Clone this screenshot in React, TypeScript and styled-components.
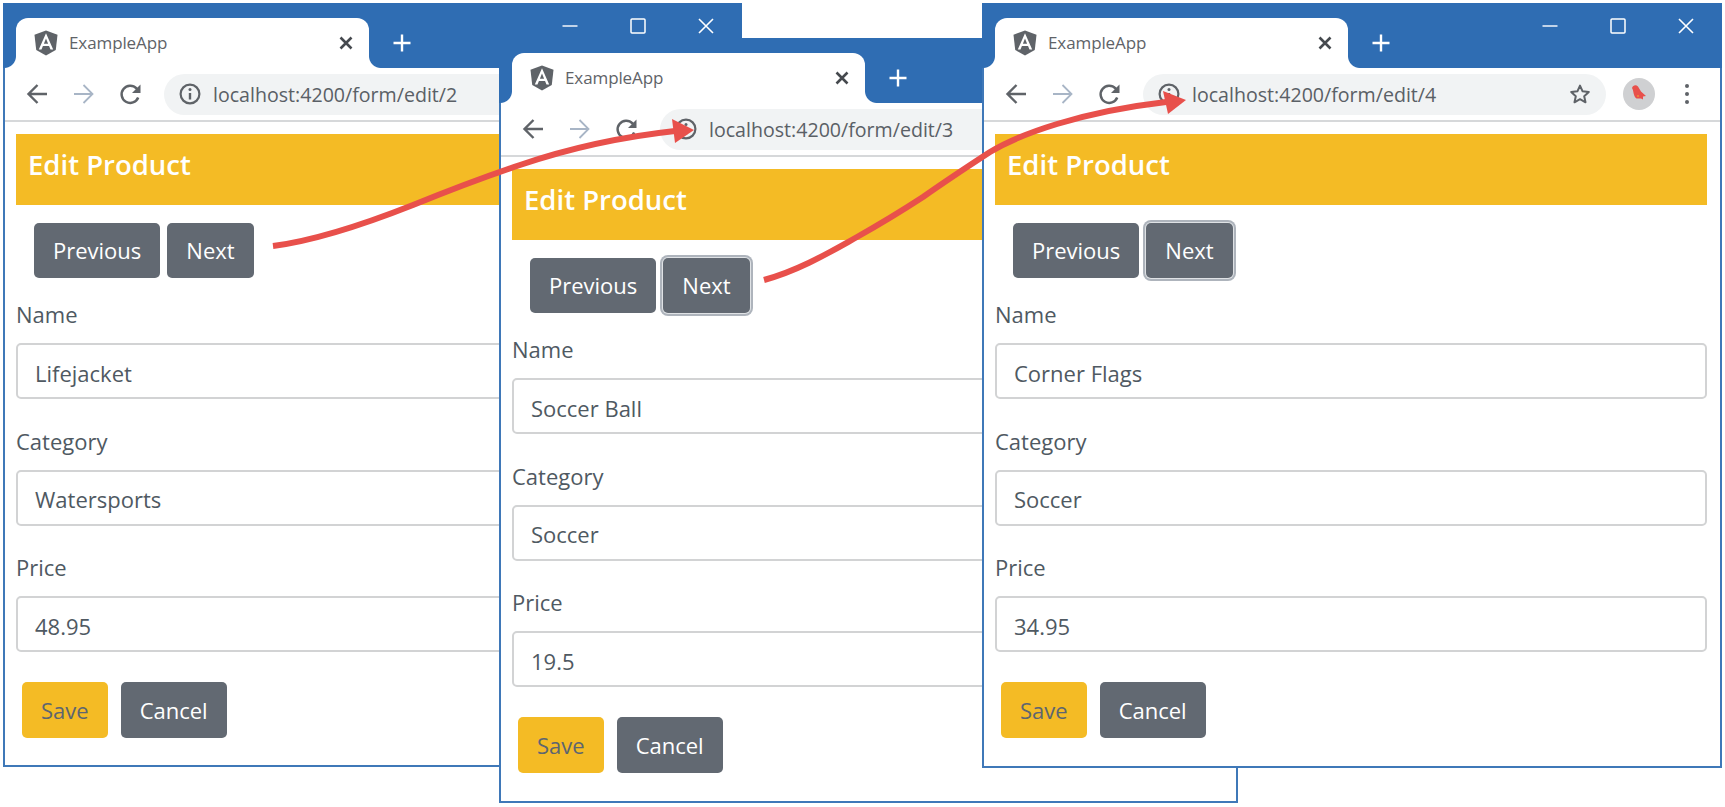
import * as React from 'react';
import styled, { createGlobalStyle } from 'styled-components';

const GlobalStyle = createGlobalStyle`
  html, body {
    margin: 0;
    padding: 0;
    background: #fff;
  }
  body {
    font-family: "Open Sans", "Noto Sans", sans-serif;
  }
`;

const Desktop = styled.div`
  position: relative;
  width: 1725px;
  height: 807px;
  overflow: hidden;
  background: #fff;
`;

// each browser window is placed on the free canvas
const Frame = styled.div<{ $left: number; $top: number; $width: number; $height: number }>`
  position: absolute;
  left: ${p => p.$left}px;
  top: ${p => p.$top}px;
  width: ${p => p.$width}px;
  height: ${p => p.$height}px;
  box-sizing: border-box;
  display: flex;
  flex-direction: column;
  background: #fff;
  border: 2px solid #3f78b8;
  border-top: none;
`;

const TitleBar = styled.div`
  height: 65px;
  flex: none;
  display: flex;
  align-items: flex-end;
  margin: 0 -2px;
  padding-left: 13px;
  background: #2f6db3;
`;

const Tab = styled.div`
  position: relative;
  box-sizing: border-box;
  width: 353px;
  height: 50px;
  display: flex;
  align-items: center;
  padding: 0 15px 0 17px;
  background: #fff;
  border-radius: 12px 12px 0 0;
  &::before,
  &::after {
    content: '';
    position: absolute;
    bottom: 0;
    width: 12px;
    height: 12px;
    background: radial-gradient(circle at var(--cx) 0, #2f6db3 11.5px, #fff 12.5px);
  }
  &::before {
    --cx: 0;
    left: -12px;
  }
  &::after {
    --cx: 100%;
    right: -12px;
  }
`;

const TabTitle = styled.span`
  flex: 1;
  margin: 0 0 2px 10px;
  font-size: 17px;
  letter-spacing: -0.1px;
  color: #5f6368;
`;

const PlusButton = styled.div`
  width: 24px;
  height: 50px;
  margin-left: 21px;
  display: flex;
  align-items: center;
  justify-content: center;
`;

const WindowControls = styled.div`
  display: flex;
  margin: 0 2px 0 auto;
  align-self: flex-start;
`;

const ControlButton = styled.div`
  width: 68px;
  height: 46px;
  display: flex;
  align-items: center;
  justify-content: center;
`;

const Toolbar = styled.div`
  height: 54px;
  flex: none;
  box-sizing: border-box;
  display: flex;
  align-items: center;
  padding: 0 23px 0 8px;
  border-bottom: 2px solid #d6d8da;
`;

const NavButton = styled.div`
  width: 47px;
  height: 40px;
  flex: none;
  display: flex;
  align-items: center;
  justify-content: center;
`;

const Omnibox = styled.div`
  flex: 1;
  min-width: 0;
  height: 41px;
  margin-left: 10px;
  padding: 0 15px;
  display: flex;
  align-items: center;
  background: #f1f3f4;
  border-radius: 21px;
`;

const Url = styled.span`
  flex: 1;
  margin-left: 12px;
  font-size: 19.6px;
  font-weight: 500;
  color: #5a6066;
  white-space: nowrap;
`;

const Avatar = styled.div`
  width: 32px;
  height: 32px;
  flex: none;
  margin: 0 22px 0 17px;
  border-radius: 50%;
  background: #cfd0d2;
  display: flex;
  align-items: center;
  justify-content: center;
`;

const MenuDots = styled.div`
  width: 20px;
  flex: none;
  display: flex;
  flex-direction: column;
  align-items: center;
  gap: 4px;
  i {
    width: 4px;
    height: 4px;
    border-radius: 50%;
    background: #5f6368;
  }
`;

const Page = styled.div`
  flex: 1;
  padding: 12px 13px 0 11px;
  color: #4f5962;
`;

const Header = styled.div`
  height: 71px;
  box-sizing: border-box;
  display: flex;
  align-items: center;
  padding: 0 0 11px 12px;
  background: #f4bb25;
  color: #fff;
  font-size: 27.5px;
  font-weight: 600;
`;

const NavRow = styled.div`
  display: flex;
  gap: 7px;
  margin: 18px 0 0 18px;
`;

const Button = styled.div<{ $tone?: 'gray' | 'yellow'; $focus?: boolean }>`
  height: 55px;
  box-sizing: border-box;
  padding: 0 19px 1px;
  display: flex;
  align-items: center;
  font-size: 22px;
  border-radius: 5px;
  background: ${p => (p.$tone === 'yellow' ? '#f4bb25' : '#626972')};
  color: ${p => (p.$tone === 'yellow' ? '#5d6570' : '#fff')};
  ${p => p.$focus && 'box-shadow: 0 0 0 1px #dfe2e5, 0 0 0 3px #aeb4bc;'}
`;

const ActionButton = styled(Button)`
  height: 56px;
  padding: 0 19px 1px;
`;

const Field = styled.div`
  margin-top: 20px;
  & + & {
    margin-top: 25.5px;
  }
`;

const Label = styled.div`
  height: 33px;
  margin-bottom: 12px;
  line-height: 33px;
  font-size: 22px;
  color: #4f5962;
`;

const Input = styled.div`
  height: 56px;
  box-sizing: border-box;
  padding: 3px 17px 0;
  display: flex;
  align-items: center;
  font-size: 22px;
  color: #4f5962;
  border: 2px solid #d2d3d4;
  border-radius: 5px;
  background: #fff;
`;

const ActionRow = styled.div`
  display: flex;
  gap: 13px;
  margin: 30px 0 0 6px;
`;

const Arrows = styled.svg`
  position: absolute;
  inset: 0;
  pointer-events: none;
`;

const AngularLogo = () => (
  <svg width="26" height="26" viewBox="20 25 210 210">
    <path fill="#5f6368" d="M125 30L31.900 63.200l14.200 123.100L125 230l78.900-43.700 14.200-123.100z" />
    <path fill="#fff" d="M125 52.100L66.800 182.600h21.700l11.700-29.200h49.400l11.700 29.200H183L125 52.100zm17 83.300h-34l17-40.900 17 40.900z" />
  </svg>
);

const CloseIcon = () => (
  <svg width="16" height="16" viewBox="0 0 16 16">
    <path d="M2.500 2.500l11 11M13.500 2.500l-11 11" stroke="#45494e" strokeWidth="2.600" fill="none" />
  </svg>
);

const PlusIcon = () => (
  <svg width="20" height="20" viewBox="0 0 20 20">
    <path d="M10 1.500v17M1.500 10h17" stroke="#fff" strokeWidth="2.400" fill="none" />
  </svg>
);

const MinIcon = () => (
  <svg width="16" height="16" viewBox="0 0 16 16">
    <path d="M0.500 8h15" stroke="#e8eef6" strokeWidth="1.600" fill="none" />
  </svg>
);

const MaxIcon = () => (
  <svg width="16" height="16" viewBox="0 0 16 16">
    <rect x="1" y="1" width="14" height="14" rx="1" stroke="#fff" strokeWidth="1.500" fill="none" />
  </svg>
);

const WinCloseIcon = () => (
  <svg width="18" height="18" viewBox="0 0 18 18">
    <path d="M2 2l14 14M16 2L2 16" stroke="#fff" strokeWidth="1.600" fill="none" />
  </svg>
);

const ArrowIcon = ({ flip, color, weight }: { flip?: boolean; color: string; weight: number }) => (
  <svg width="22" height="22" viewBox="0 0 22 22" style={flip ? { transform: 'scaleX(-1)' } : undefined}>
    <path d="M21 11H3M11.500 2L2.500 11l9 9" stroke={color} strokeWidth={weight} fill="none" />
  </svg>
);

const ReloadIcon = () => (
  <svg width="23" height="23" viewBox="0 0 23 23">
    <path d="M19.200 14.500A8.600 8.600 0 1 1 17.500 5.400L20 8" stroke="#5f6368" strokeWidth="2.500" fill="none" />
    <path d="M21.500 1.500v8.500H13z" fill="#5f6368" />
  </svg>
);

const InfoIcon = () => (
  <svg width="22" height="22" viewBox="0 0 22 22" style={{ flex: 'none' }}>
    <circle cx="11" cy="11" r="9.400" stroke="#5f6368" strokeWidth="2.200" fill="none" />
    <path d="M11 10v6.500" stroke="#5f6368" strokeWidth="2.400" />
    <circle cx="11" cy="6.600" r="1.500" fill="#5f6368" />
  </svg>
);

const StarIcon = () => (
  <svg width="22" height="22" viewBox="0 0 22 22" style={{ flex: 'none' }}>
    <path
      d="M11 2.600l2.600 5.700 6.200.7-4.600 4.200 1.300 6.100L11 16.200l-5.500 3.100 1.300-6.100L2.200 9l6.200-.7z"
      stroke="#5f6368"
      strokeWidth="2"
      strokeLinejoin="round"
      fill="none"
    />
  </svg>
);

const BirdIcon = () => (
  <svg width="22" height="22" viewBox="0 0 22 22">
    <path fill="#e8504b" d="M4 5c1-3 4-3.500 6-1.500l3 5 5 4.500-3 .5v3l-2-1h-4.500C5 13 6 8 4 5z" />
    <circle cx="10" cy="13" r="0.800" fill="#f4bb25" />
  </svg>
);

interface Product {
  id: number;
  name: string;
  category: string;
  price: string;
  left: number;
  top: number;
  width: number;
  height: number;
  focusNext: boolean;
}

const products: Product[] = [
  { id: 2, name: 'Lifejacket', category: 'Watersports', price: '48.95', left: 3, top: 3, width: 739, height: 764, focusNext: false },
  { id: 3, name: 'Soccer Ball', category: 'Soccer', price: '19.5', left: 499, top: 38, width: 739, height: 765, focusNext: true },
  { id: 4, name: 'Corner Flags', category: 'Soccer', price: '34.95', left: 982, top: 3, width: 740, height: 765, focusNext: true }
];

const BrowserWindow = ({ product }: { product: Product }) => (
  <Frame $left={product.left} $top={product.top} $width={product.width} $height={product.height}>
    <TitleBar>
      <Tab>
        <AngularLogo />
        <TabTitle>ExampleApp</TabTitle>
        <CloseIcon />
      </Tab>
      <PlusButton>
        <PlusIcon />
      </PlusButton>
      <WindowControls>
        <ControlButton>
          <MinIcon />
        </ControlButton>
        <ControlButton>
          <MaxIcon />
        </ControlButton>
        <ControlButton>
          <WinCloseIcon />
        </ControlButton>
      </WindowControls>
    </TitleBar>
    <Toolbar>
      <NavButton>
        <ArrowIcon color="#5f6368" weight={2.4} />
      </NavButton>
      <NavButton>
        <ArrowIcon flip color="#a8b5c6" weight={1.8} />
      </NavButton>
      <NavButton>
        <ReloadIcon />
      </NavButton>
      <Omnibox>
        <InfoIcon />
        <Url>localhost:4200/form/edit/{product.id}</Url>
        <StarIcon />
      </Omnibox>
      <Avatar>
        <BirdIcon />
      </Avatar>
      <MenuDots>
        <i />
        <i />
        <i />
      </MenuDots>
    </Toolbar>
    <Page>
      <Header>Edit Product</Header>
      <NavRow>
        <Button>Previous</Button>
        <Button $focus={product.focusNext}>Next</Button>
      </NavRow>
      <Field>
        <Label>Name</Label>
        <Input>{product.name}</Input>
      </Field>
      <Field>
        <Label>Category</Label>
        <Input>{product.category}</Input>
      </Field>
      <Field>
        <Label>Price</Label>
        <Input>{product.price}</Input>
      </Field>
      <ActionRow>
        <ActionButton $tone="yellow">Save</ActionButton>
        <ActionButton>Cancel</ActionButton>
      </ActionRow>
    </Page>
  </Frame>
);

export default function App() {
  return (
    <Desktop>
      <GlobalStyle />
      {products.map(p => (
        <BrowserWindow key={p.id} product={p} />
      ))}
      <Arrows width="1725" height="807" viewBox="0 0 1725 807">
        <path
          d="M273 246C320 240 370 222 413 205C450 190 490 175 520 165C570 148 620 137 675 131"
          stroke="#e8504b"
          strokeWidth="6"
          fill="none"
        />
        <path d="M672 119L694 130L675 143z" fill="#e8504b" />
        <path
          d="M764 280C800 270 830 252 857 237C880 224 900 212 923 197C950 178 970 165 990 152C1020 134 1080 112 1166 102"
          stroke="#e8504b"
          strokeWidth="6"
          fill="none"
        />
        <path d="M1163 91L1186 100L1168 114z" fill="#e8504b" />
      </Arrows>
    </Desktop>
  );
}
